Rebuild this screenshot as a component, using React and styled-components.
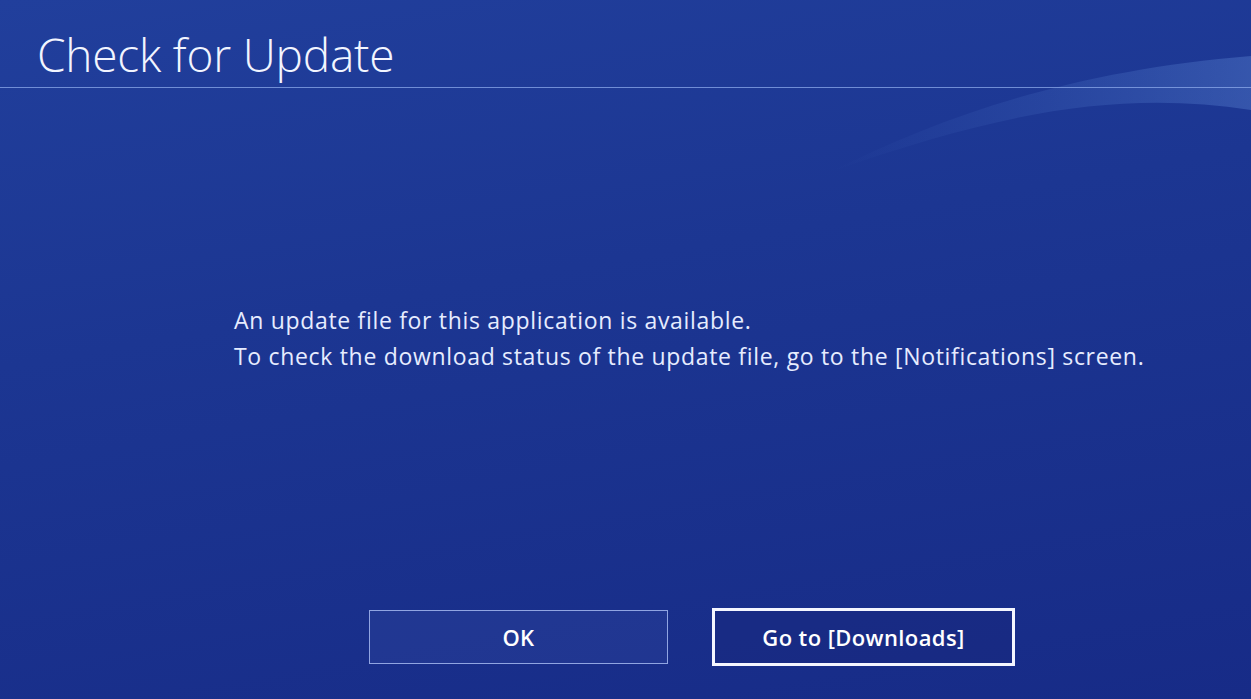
import React from "react"
import styled, { createGlobalStyle } from "styled-components"

const GlobalStyle = createGlobalStyle`
  html, body {
    margin: 0;
    padding: 0;
    background: #1a318f;
  }
  body {
    font-family: "Open Sans", "Noto Sans", sans-serif;
  }
`

const Screen = styled.div`
  position: relative;
  width: 1251px;
  height: 699px;
  overflow: hidden;
  display: flex;
  flex-direction: column;
  background: linear-gradient(170deg, #213f9c 0%, #1c3692 40%, #172b87 100%);
  color: #f2f5ff;
`

const Swoosh = styled.svg`
  position: absolute;
  top: 0;
  left: 0;
  pointer-events: none;
`

const Header = styled.header`
  position: relative;
  height: 87px;
  padding-left: 37px;
  display: flex;
  align-items: flex-end;
  border-bottom: 1px solid rgba(140, 170, 235, 0.75);
`

const Title = styled.h1`
  margin: 0 0 10px;
  font-size: 46px;
  font-weight: 300;
  line-height: 1;
  letter-spacing: -0.2px;
`

const Body = styled.main`
  position: relative;
  flex: 1;
  display: flex;
  flex-direction: column;
  padding: 214px 0 0 234px;
`

const Message = styled.p`
  margin: 0;
  font-size: 23px;
  font-weight: 400;
  line-height: 36px;
  letter-spacing: 0.68px;
  color: #e6ecff;
`

const Actions = styled.div`
  margin-top: auto;
  margin-bottom: 33px;
  display: flex;
  align-items: center;
  gap: 44px;
  padding-left: 135px;
`

const Button = styled.button`
  box-sizing: border-box;
  width: ${p => (p.$focused ? "303px" : "299px")};
  height: ${p => (p.$focused ? "58px" : "54px")};
  padding: 0;
  background: ${p => (p.$focused ? "rgba(25, 40, 125, 0.45)" : "rgba(70, 95, 180, 0.18)")};
  border: ${p => (p.$focused ? "3px solid #f4f6ff" : "1.5px solid rgba(165, 185, 240, 0.85)")};
  color: #ffffff;
  font-family: "Open Sans", "Noto Sans", sans-serif;
  font-size: 22px;
  font-weight: 600;
  letter-spacing: 0.4px;
  cursor: pointer;
`

export default function App() {
  return (
    <Screen>
      <GlobalStyle />
      <Swoosh width="1251" height="699" viewBox="0 0 1251 699">
        <defs>
          <linearGradient id="sw" x1="0" y1="0" x2="1" y2="0">
            <stop offset="0" stopColor="#5a86d6" stopOpacity="0" />
            <stop offset="0.5" stopColor="#5a86d6" stopOpacity="0.16" />
            <stop offset="1" stopColor="#6a96e0" stopOpacity="0.32" />
          </linearGradient>
        </defs>
        <path
          d="M830 172 C 950 112, 1080 70, 1251 56 L 1251 110 C 1120 90, 1000 112, 830 172 Z"
          fill="url(#sw)"
        />
      </Swoosh>
      <Header>
        <Title>Check for Update</Title>
      </Header>
      <Body>
        <Message>
          An update file for this application is available.
          <br />
          To check the download status of the update file, go to the [Notifications] screen.
        </Message>
        <Actions>
          <Button>OK</Button>
          <Button $focused>Go to [Downloads]</Button>
        </Actions>
      </Body>
    </Screen>
  )
}
